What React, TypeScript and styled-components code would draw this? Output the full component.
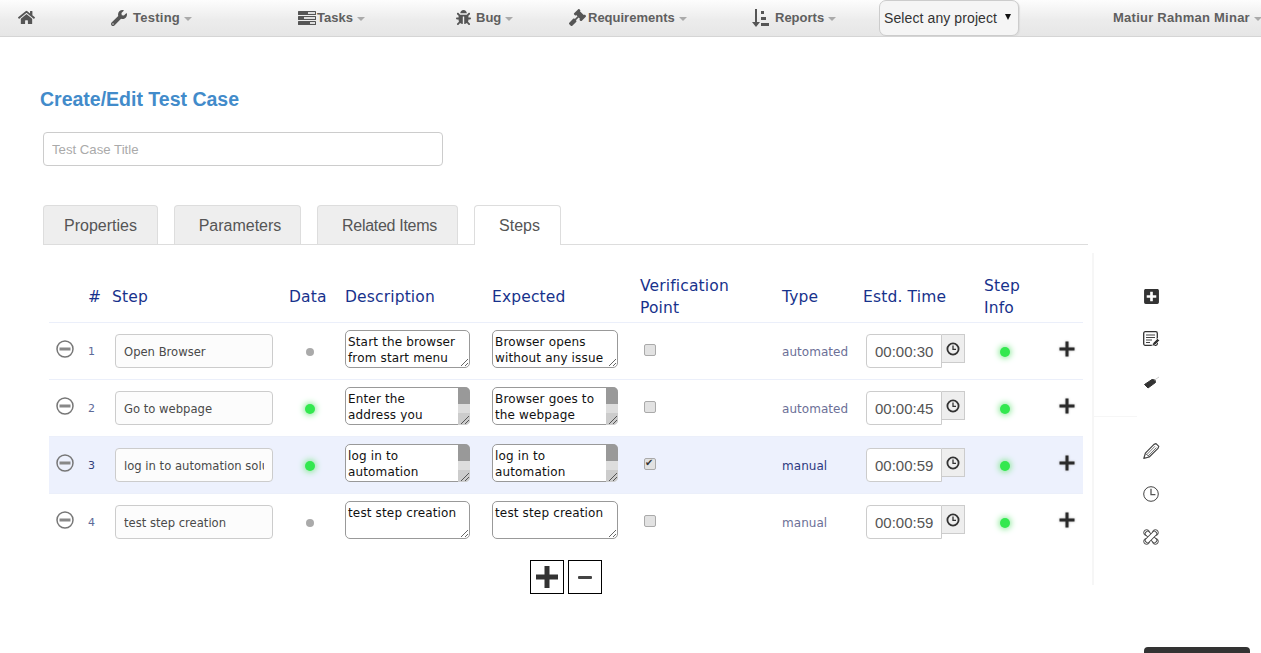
import styled, { createGlobalStyle } from "styled-components";
import { FaBug, FaGavel, FaHome, FaPlusSquare, FaWrench } from "react-icons/fa";

const GlobalStyle = createGlobalStyle`
  html, body {
    margin: 0;
    padding: 0;
    height: 100%;
    overflow: hidden;
    background: #fff;
  }
  body {
    font-family: "Liberation Sans", Arial, sans-serif;
  }
  * {
    box-sizing: border-box;
  }
`;

// icons not in the packages
const TasksIcon = () => (
  <svg width="18" height="14" viewBox="0 0 18 14">
    <rect width="18" height="4" rx="0.5" fill="#555" />
    <rect x="10" y="1" width="7" height="2" fill="#ddd" />
    <rect y="5" width="18" height="4" rx="0.5" fill="#555" />
    <rect x="6" y="6" width="11" height="2" fill="#ddd" />
    <rect y="10" width="18" height="4" rx="0.5" fill="#555" />
    <rect x="12" y="11" width="5" height="2" fill="#ddd" />
  </svg>
);

const ReportsIcon = () => (
  <svg width="18" height="18" viewBox="0 0 18 18">
    <path d="M4 0h2v13h3l-4 5-4-5h3z" fill="#555" />
    <rect x="10" y="2" width="3" height="3" fill="#555" />
    <rect x="10" y="8" width="5" height="3" fill="#555" />
    <rect x="10" y="14" width="8" height="3" fill="#555" />
  </svg>
);

const MinusCircle = () => (
  <svg width="18" height="18" viewBox="0 0 18 18">
    <circle cx="9" cy="9" r="8" fill="none" stroke="#777" strokeWidth="1.5" />
    <rect x="3.5" y="7.5" width="11" height="3" fill="#888" />
  </svg>
);

const TimeIcon = () => (
  <svg width="14" height="14" viewBox="0 0 14 14">
    <circle cx="7" cy="7" r="5.6" fill="none" stroke="#333" strokeWidth="1.8" />
    <path d="M7 3.6V7.4H10" fill="none" stroke="#333" strokeWidth="1.3" />
  </svg>
);

const ThickPlus = () => (
  <svg width="18" height="18" viewBox="0 0 18 18">
    <path d="M7.5 1.5h3v6h6v3h-6v6h-3v-6h-6v-3h6z" fill="#2b2b2b" />
  </svg>
);

const NotesIcon = () => (
  <svg width="17" height="16" viewBox="0 0 17 16">
    <rect x="0.7" y="0.7" width="13.6" height="13.6" rx="1.5" fill="none" stroke="#333" strokeWidth="1.3" />
    <path d="M3 4h9M3 6.5h9M3 9h6M3 11.5h4" stroke="#444" strokeWidth="1.1" />
    <path d="M9 15l1-3 4.5-4.5 2 2L12 14z" fill="#333" stroke="#fff" strokeWidth="0.6" />
  </svg>
);

const TagIcon = () => (
  <svg width="16" height="16" viewBox="0 0 16 16">
    <path d="M1.5 10.5L9 5.5l3 .5 .5 2.5L5 14z" fill="#333" stroke="#333" strokeLinejoin="round" />
    <path d="M11.5 6L16 3" stroke="#ccc" strokeWidth="1" />
  </svg>
);

const PencilIcon = () => (
  <svg width="17" height="16" viewBox="0 0 17 16">
    <path
      d="M0.8 15.4L2.4 10.2 11 1.4 13 0.6 15.8 3.4 15 5.4 6.2 14z"
      fill="#fff"
      stroke="#444"
      strokeWidth="1.2"
      strokeLinejoin="round"
    />
    <path d="M3.6 11.8L12 3.2M5 13L13.4 4.6M2.4 10.2L6.2 14" stroke="#555" strokeWidth="0.8" fill="none" />
  </svg>
);

const ThinClock = () => (
  <svg width="16" height="16" viewBox="0 0 16 16">
    <circle cx="8" cy="8" r="7.3" fill="none" stroke="#444" strokeWidth="1" />
    <path d="M8 2.8V8.6H12.4" fill="none" stroke="#555" strokeWidth="1.3" />
  </svg>
);

const ToolsIcon = () => (
  <svg width="16" height="16" viewBox="0 0 16 16">
    <g fill="#fff" stroke="#444" strokeWidth="1">
      <circle cx="3.6" cy="3.6" r="2.9" />
      <circle cx="12.4" cy="3.6" r="2.9" />
      <circle cx="3.6" cy="12.4" r="2.9" />
      <circle cx="12.4" cy="12.4" r="2.9" />
      <rect x="1" y="5.7" width="14" height="4.6" rx="1.5" transform="rotate(45 8 8)" />
      <rect x="1" y="5.7" width="14" height="4.6" rx="1.5" transform="rotate(-45 8 8)" />
    </g>
  </svg>
);

const Navbar = styled.nav`
  display: flex;
  align-items: flex-start;
  height: 37px;
  padding-left: 18px;
  background: linear-gradient(to bottom, #fdfdfd 0%, #ececec 55%, #e6e6e6 100%);
  border-bottom: 1px solid #d5d5d5;
  overflow: hidden;
`;

const NavItem = styled.a<{ $width: number; $gap: number; $spaced?: boolean }>`
  display: flex;
  flex: none;
  align-items: center;
  width: ${(p) => p.$width}px;
  height: 35px;
  font-size: 13px;
  font-weight: bold;
  letter-spacing: ${(p) => (p.$spaced ? 0.25 : 0)}px;
  color: #5f5f5f;
  white-space: nowrap;

  svg {
    flex: none;
    margin-right: ${(p) => p.$gap}px;
    color: #555;
  }
`;

const Caret = styled.span`
  width: 0;
  height: 0;
  margin-left: 4px;
  margin-top: 2px;
  border-top: 4px solid #aaa;
  border-left: 4px solid transparent;
  border-right: 4px solid transparent;
`;

const ProjectSelect = styled.div`
  display: flex;
  flex: none;
  align-items: center;
  justify-content: space-between;
  width: 140px;
  height: 36px;
  padding: 0 5px 0 4px;
  font-size: 14px;
  letter-spacing: 0.1px;
  color: #333;
  background: #f5f5f5;
  border: 1px solid #ccc;
  border-radius: 7px;
  box-shadow: 1px 1px 1px #ddd;
  margin-right: 94px;
`;

const SelectArrow = styled.span`
  width: 0;
  height: 0;
  margin: -3px 2px 0 0;
  border-top: 6px solid #111;
  border-left: 3px solid transparent;
  border-right: 3px solid transparent;
`;

const Title = styled.h1`
  margin: 51px 0 0 40px;
  font-size: 19.5px;
  line-height: 23px;
  font-weight: bold;
  color: #428bca;
`;

const TitleInput = styled.input`
  display: block;
  width: 400px;
  height: 34px;
  margin: 21px 0 0 43px;
  padding: 0 8px;
  font-family: inherit;
  font-size: 13.2px;
  color: #555;
  border: 1px solid #ccc;
  border-radius: 4px;
  outline: none;

  &::placeholder {
    color: #aaa;
  }
`;

const TabList = styled.div`
  display: flex;
  gap: 16px;
  width: 1045px;
  height: 40px;
  margin: 39px 0 0 43px;
  border-bottom: 1px solid #ddd;
`;

const Tab = styled.div<{ $width: number; $active?: boolean; $shift?: number; $tight?: boolean }>`
  width: ${(p) => p.$width}px;
  height: ${(p) => (p.$active ? 40 : 39)}px;
  padding: 11px 0 0 ${(p) => p.$shift ?? 0}px;
  font-size: 16px;
  line-height: 18px;
  letter-spacing: ${(p) => (p.$tight ? -0.3 : 0)}px;
  text-align: center;
  color: #555;
  background: ${(p) => (p.$active ? "#fff" : "#eee")};
  border: 1px solid #ddd;
  border-bottom: none;
  border-radius: 4px 4px 0 0;
`;

const Workspace = styled.div`
  display: flex;
  align-items: flex-start;
  gap: 9px;
  margin: 8px 0 0 49px;
`;

const StepsPanel = styled.div`
  width: 1034px;
  padding-top: 17px;
  font-family: "DejaVu Sans", Verdana, sans-serif;
`;

const columns = "39px 24px 177px 56px 147px 148px 142px 81px 121px 70px 29px";

const HeaderRow = styled.div`
  display: grid;
  grid-template-columns: ${columns};
  align-items: center;
  height: 52px;
  padding-top: 1px;
  font-size: 15.5px;
  line-height: 22px;
  letter-spacing: 0.15px;
  color: #17328c;
`;

const Row = styled.div<{ $active?: boolean }>`
  display: grid;
  grid-template-columns: ${columns};
  align-items: start;
  height: 57px;
  background: ${(p) => (p.$active ? "#edf1fd" : "#fff")};
  border-top: 1px solid #ebeffa;
`;

const RemoveCell = styled.div`
  margin: 17px 0 0 7px;
  height: 18px;
`;

const RowNumber = styled.div<{ $active?: boolean }>`
  margin-top: 21px;
  font-size: 11px;
  line-height: 16px;
  color: ${(p) => (p.$active ? "#33407a" : "#5d6a98")};
`;

const StepInput = styled.input`
  display: block;
  width: 158px;
  height: 34px;
  margin: 11px 0 0 3px;
  padding: 1px 8px 0;
  font-family: inherit;
  font-size: 11.6px;
  color: #4a4a4a;
  background: #fcfcfc;
  border: 1px solid #ccc;
  border-radius: 4px;
  outline: none;
`;

const DotCell = styled.div`
  display: flex;
  align-items: center;
  justify-content: center;
  width: 42px;
  height: 20px;
  margin-top: 19px;
`;

const Dot = styled.span<{ $on?: boolean }>`
  width: ${(p) => (p.$on ? 10 : 8)}px;
  height: ${(p) => (p.$on ? 10 : 8)}px;
  border-radius: 50%;
  background: ${(p) => (p.$on ? "#33e84f" : "#aaa")};
  box-shadow: ${(p) => (p.$on ? "0 0 6px 1px #7ee68d" : "none")};
`;

const NoteBox = styled.div<{ $width: number }>`
  position: relative;
  width: ${(p) => p.$width}px;
  height: 38px;
  margin-top: 7px;
`;

const Note = styled.textarea<{ $scroll: boolean }>`
  display: block;
  width: 100%;
  height: 100%;
  padding: 3px ${(p) => (p.$scroll ? 18 : 2)}px 3px 2px;
  font-family: inherit;
  font-size: 12px;
  line-height: 16px;
  letter-spacing: 0.15px;
  color: #111;
  background: #fff;
  border: 1px solid #999;
  border-radius: 5px;
  outline: none;
  overflow: hidden;
  resize: ${(p) => (p.$scroll ? "none" : "both")};
`;

// headless chrome hides native scrollbars, this one sits over the textarea
const ScrollTrack = styled.div`
  position: absolute;
  top: 0;
  right: 0;
  display: flex;
  flex-direction: column;
  width: 12px;
  height: 38px;
  background: #ddd;
  border-radius: 0 5px 5px 0;
  overflow: hidden;
`;

const ScrollThumb = styled.div`
  height: 17px;
  background: #999;
`;

const ScrollCorner = styled.div`
  margin-top: auto;
  height: 12px;
  background: #ccc;

  svg {
    display: block;
  }
`;

const Verify = styled.input`
  appearance: none;
  display: block;
  position: relative;
  width: 12px;
  height: 12px;
  margin: 21px 0 0 4px;
  background: #e2e2e2;
  border: 1px solid #aaa;
  border-radius: 2px;

  &:checked::after {
    content: "✔";
    position: absolute;
    top: -2px;
    left: 0;
    font-size: 10px;
    line-height: 12px;
    color: #333;
  }
`;

const TypeLabel = styled.div<{ $active?: boolean }>`
  margin-top: 21px;
  font-size: 12px;
  line-height: 16px;
  letter-spacing: 0.05px;
  color: ${(p) => (p.$active ? "#2e3a80" : "#6c7097")};
`;

const TimeGroup = styled.div`
  display: flex;
  align-items: flex-start;
  margin: 11px 0 0 3px;
`;

const TimeInput = styled.input`
  width: 76px;
  height: 34px;
  padding: 0 0 0 8px;
  font-family: "Liberation Sans", Arial, sans-serif;
  font-size: 15px;
  color: #555;
  background: #fff;
  border: 1px solid #ccc;
  border-radius: 4px 0 0 4px;
  outline: none;
`;

const TimeButton = styled.div`
  display: flex;
  align-items: center;
  justify-content: center;
  width: 23px;
  height: 29px;
  background: #eee;
  border: 1px solid #ccc;
  border-left: none;
`;

const AddCell = styled.div`
  margin: 17px 0 0 4px;
  height: 18px;
  filter: drop-shadow(0 0 1px #aaa);
`;

const PanelActions = styled.div`
  display: flex;
  justify-content: center;
  gap: 4px;
  margin-top: 10px;
`;

const SquareButton = styled.button`
  display: flex;
  align-items: center;
  justify-content: center;
  width: 34px;
  height: 34px;
  padding: 0;
  background: #fff;
  border: 1px solid #000;
`;

const Sidebar = styled.aside`
  width: 120px;
  height: 332px;
  padding-top: 35px;
  border-left: 2px solid #f6f6f6;
`;

const IconGroup = styled.div`
  display: flex;
  flex-direction: column;
  gap: 27px;
  padding-left: 49px;

  svg {
    display: block;
    color: #333;
  }
`;

const SideIcon = styled.div`
  width: 17px;
  height: 16px;
`;

const SideDivider = styled.div`
  width: 43px;
  height: 1px;
  margin: 26px 0;
  background: #f6f6f6;
`;

const CornerBar = styled.div`
  position: fixed;
  right: 11px;
  bottom: 0;
  width: 106px;
  height: 6px;
  background: #333;
  border-radius: 4px 4px 0 0;
`;

const steps = [
  {
    id: 1,
    title: "Open Browser",
    hasData: false,
    description: "Start the browser from start menu",
    expected: "Browser opens without any issue",
    overflow: false,
    verify: false,
    type: "automated",
    time: "00:00:30",
  },
  {
    id: 2,
    title: "Go to webpage",
    hasData: true,
    description: "Enter the address you want to test in the address bar",
    expected: "Browser goes to the webpage that was entered before",
    overflow: true,
    verify: false,
    type: "automated",
    time: "00:00:45",
  },
  {
    id: 3,
    title: "log in to automation solution",
    hasData: true,
    description: "log in to automation solution with a valid user",
    expected: "log in to automation solution with a valid user",
    overflow: true,
    verify: true,
    type: "manual",
    time: "00:00:59",
  },
  {
    id: 4,
    title: "test step creation",
    hasData: false,
    description: "test step creation",
    expected: "test step creation",
    overflow: false,
    verify: false,
    type: "manual",
    time: "00:00:59",
  },
];

function NoteField({ value, width, overflow }: { value: string; width: number; overflow: boolean }) {
  return (
    <NoteBox $width={width}>
      <Note defaultValue={value} $scroll={overflow} />
      {overflow && (
        <ScrollTrack>
          <ScrollThumb />
          <ScrollCorner>
            <svg width="12" height="12" viewBox="0 0 12 12">
              <path d="M3 11L11 3M7 11L11 7" stroke="#555" strokeWidth="1" />
            </svg>
          </ScrollCorner>
        </ScrollTrack>
      )}
    </NoteBox>
  );
}

export default function App() {
  return (
    <>
      <GlobalStyle />
      <Navbar>
        <NavItem $width={93} $gap={0}>
          <FaHome size={17} />
        </NavItem>
        <NavItem $width={187} $gap={6} $spaced>
          <FaWrench size={16} />
          Testing
          <Caret />
        </NavItem>
        <NavItem $width={158} $gap={1}>
          <TasksIcon />
          Tasks
          <Caret />
        </NavItem>
        <NavItem $width={113} $gap={5}>
          <FaBug size={15} />
          Bug
          <Caret />
        </NavItem>
        <NavItem $width={182} $gap={2}>
          <FaGavel size={17} />
          Requirements
          <Caret />
        </NavItem>
        <NavItem $width={128} $gap={6}>
          <ReportsIcon />
          Reports
          <Caret />
        </NavItem>
        <ProjectSelect>
          Select any project
          <SelectArrow />
        </ProjectSelect>
        <NavItem $width={148} $gap={0} $spaced>
          Matiur Rahman Minar
          <Caret />
        </NavItem>
      </Navbar>

      <Title>Create/Edit Test Case</Title>
      <TitleInput placeholder="Test Case Title" />

      <TabList>
        <Tab $width={115}>Properties</Tab>
        <Tab $width={127} $shift={5}>
          Parameters
        </Tab>
        <Tab $width={141} $shift={4} $tight>
          Related Items
        </Tab>
        <Tab $width={87} $active $shift={4}>
          Steps
        </Tab>
      </TabList>

      <Workspace>
        <StepsPanel>
          <HeaderRow>
            <span />
            <span>#</span>
            <span>Step</span>
            <span>Data</span>
            <span>Description</span>
            <span>Expected</span>
            <span>
              Verification
              <br />
              Point
            </span>
            <span>Type</span>
            <span>Estd. Time</span>
            <span>
              Step
              <br />
              Info
            </span>
            <span />
          </HeaderRow>

          {steps.map((step) => (
            <Row key={step.id} $active={step.verify}>
              <RemoveCell>
                <MinusCircle />
              </RemoveCell>
              <RowNumber $active={step.verify}>{step.id}</RowNumber>
              <div>
                <StepInput defaultValue={step.title} />
              </div>
              <DotCell>
                <Dot $on={step.hasData} />
              </DotCell>
              <NoteField value={step.description} width={125} overflow={step.overflow} />
              <NoteField value={step.expected} width={126} overflow={step.overflow} />
              <div>
                <Verify type="checkbox" defaultChecked={step.verify} />
              </div>
              <TypeLabel $active={step.verify}>{step.type}</TypeLabel>
              <TimeGroup>
                <TimeInput defaultValue={step.time} />
                <TimeButton>
                  <TimeIcon />
                </TimeButton>
              </TimeGroup>
              <DotCell>
                <Dot $on />
              </DotCell>
              <AddCell>
                <ThickPlus />
              </AddCell>
            </Row>
          ))}

          <PanelActions>
            <SquareButton>
              <svg width="22" height="22" viewBox="0 0 22 22">
                <path d="M8.5 0h5v8.5H22v5h-8.5V22h-5v-8.5H0v-5h8.5z" fill="#333" />
              </svg>
            </SquareButton>
            <SquareButton>
              <svg width="14" height="3" viewBox="0 0 14 3">
                <rect width="14" height="3" rx="1" fill="#444" />
              </svg>
            </SquareButton>
          </PanelActions>
        </StepsPanel>

        <Sidebar>
          <IconGroup>
            <SideIcon>
              <FaPlusSquare size={17} />
            </SideIcon>
            <SideIcon>
              <NotesIcon />
            </SideIcon>
            <SideIcon>
              <TagIcon />
            </SideIcon>
          </IconGroup>
          <SideDivider />
          <IconGroup>
            <SideIcon>
              <PencilIcon />
            </SideIcon>
            <SideIcon>
              <ThinClock />
            </SideIcon>
            <SideIcon>
              <ToolsIcon />
            </SideIcon>
          </IconGroup>
        </Sidebar>
      </Workspace>

      <CornerBar />
    </>
  );
}
